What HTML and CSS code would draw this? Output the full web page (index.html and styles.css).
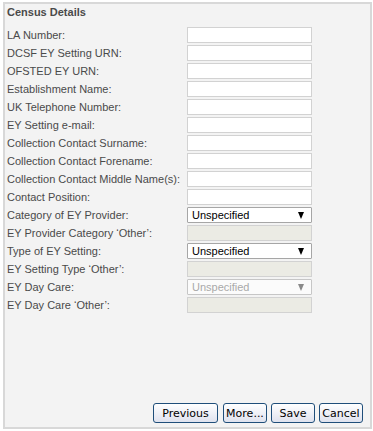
FILE: index.html
```html
<!DOCTYPE html>
<html lang="en">
<head>
    <meta charset="UTF-8"/>
    <title>Census Details</title>
    <link rel="stylesheet" href="styles.css">
</head>
<body>

<div class="panel">
    <h3 class="panel-title">Census Details</h3>

    <div class="form-grid">
        <label for="la-number">LA Number:</label>
        <input type="text" id="la-number"/>

        <label for="dcsf-urn">DCSF EY Setting URN:</label>
        <input type="text" id="dcsf-urn"/>

        <label for="ofsted-urn">OFSTED EY URN:</label>
        <input type="text" id="ofsted-urn"/>

        <label for="est-name">Establishment Name:</label>
        <input type="text" id="est-name"/>

        <label for="phone">UK Telephone Number:</label>
        <input type="text" id="phone"/>

        <label for="email">EY Setting e-mail:</label>
        <input type="text" id="email"/>

        <label for="surname">Collection Contact Surname:</label>
        <input type="text" id="surname"/>

        <label for="forename">Collection Contact Forename:</label>
        <input type="text" id="forename"/>

        <label for="middle">Collection Contact Middle Name(s):</label>
        <input type="text" id="middle"/>

        <label for="position">Contact Position:</label>
        <input type="text" id="position"/>

        <label for="category">Category of EY Provider:</label>
        <div class="select-wrap">
            <select id="category"><option>Unspecified</option></select>
        </div>

        <label for="category-other" class="muted">EY Provider Category ‘Other’:</label>
        <input type="text" id="category-other" disabled/>

        <label for="setting-type">Type of EY Setting:</label>
        <div class="select-wrap">
            <select id="setting-type"><option>Unspecified</option></select>
        </div>

        <label for="setting-other" class="muted">EY Setting Type ‘Other’:</label>
        <input type="text" id="setting-other" disabled/>

        <label for="day-care">EY Day Care:</label>
        <div class="select-wrap disabled">
            <select id="day-care" disabled><option>Unspecified</option></select>
        </div>

        <label for="day-care-other" class="muted">EY Day Care ‘Other’:</label>
        <input type="text" id="day-care-other" disabled/>
    </div>

    <div class="btn-group">
        <button class="nav-button wide">Previous</button>
        <button class="nav-button">More...</button>
        <button class="nav-button">Save</button>
        <button class="nav-button">Cancel</button>
    </div>
</div>

</body>
</html>
```

FILE: styles.css
```css
* {
    margin: 0;
    padding: 0;
    box-sizing: border-box;
}

html, body {
    height: 100%;
}

body {
    font-family: 'Liberation Sans', Arial, sans-serif;
    font-size: 11px;
    color: #4a4a4a;
    background-color: white;
    padding: 2px 1px 2px 3px;
}

.panel {
    height: 100%;
    background-color: #f3f3f3;
    border: 2px solid #d8d8d8;
    padding: 1px 2px 2px 2px;
    display: flex;
    flex-direction: column;
}

.panel-title {
    font-size: 11px;
    font-weight: bold;
    line-height: 14px;
    color: #4a4a4a;
    margin-bottom: 8px;
}

.form-grid {
    display: grid;
    grid-template-columns: 180px 125px;
    grid-auto-rows: 16px;
    row-gap: 2px;
    align-items: center;
}

.form-grid label {
    line-height: 16px;
    white-space: nowrap;
}

input[type="text"] {
    width: 125px;
    height: 16px;
    border: 1px solid #d2d2d2;
    background-color: white;
}

input[disabled] {
    background-color: #ebebe4;
}

.select-wrap {
    position: relative;
    height: 16px;
}

.select-wrap select {
    appearance: none;
    -webkit-appearance: none;
    width: 125px;
    height: 16px;
    border: 1px solid #a6a6a6;
    border-radius: 1px;
    background-color: white;
    font-family: 'Liberation Sans', Arial, sans-serif;
    font-size: 11px;
    line-height: 14px;
    color: black;
    padding: 0 0 0 4px;
}

.select-wrap::after {
    content: "";
    position: absolute;
    right: 8px;
    top: 5px;
    border-left: 3.5px solid transparent;
    border-right: 3.5px solid transparent;
    border-top: 7px solid black;
    pointer-events: none;
}

.select-wrap.disabled select {
    color: #8a8a8a;
    border-color: #b4b4b4;
}

.select-wrap.disabled::after {
    border-top-color: #8a8a8a;
}

.btn-group {
    margin-top: auto;
    display: flex;
    justify-content: flex-end;
    gap: 4px;
    padding-right: 5px;
    padding-bottom: 2px;
}

.nav-button {
    font-family: 'DejaVu Sans', Verdana, sans-serif;
    font-size: 11px;
    color: black;
    height: 20px;
    min-width: 44px;
    padding: 0 2px;
    border: 1px solid #1f4e7a;
    border-radius: 3px;
    background: linear-gradient(#ffffff, #dfe2ee);
    cursor: pointer;
}

.nav-button.wide {
    width: 65px;
    margin-right: 1px;
}
```
